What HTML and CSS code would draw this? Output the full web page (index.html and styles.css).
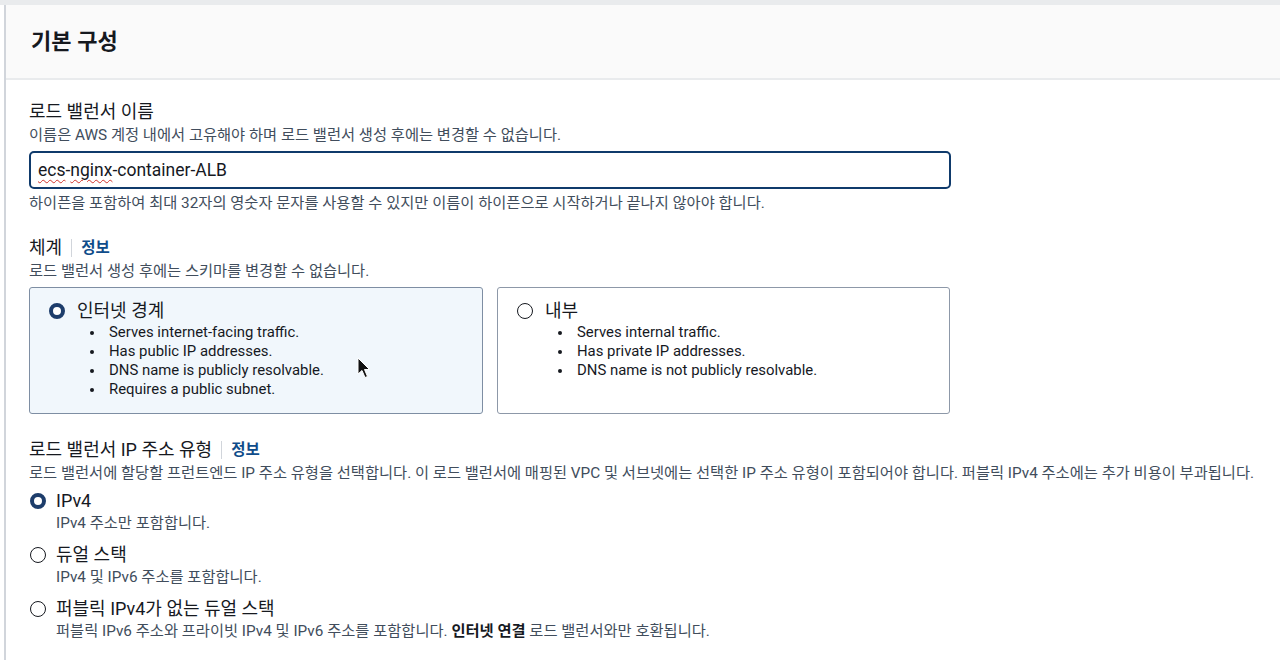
FILE: index.html
```html
<!DOCTYPE html>
<html lang="ko">
<head>
    <meta charset="UTF-8">
    <title>기본 구성</title>
    <link rel="stylesheet" href="styles.css">
</head>
<body>
    <div class="top-band"></div>
    <div class="panel">
        <div class="panel-header">
            <h2>기본 구성</h2>
        </div>
        <div class="panel-body">
            <div class="field">
                <div class="label">로드 밸런서 이름</div>
                <div class="desc">이름은 AWS 계정 내에서 고유해야 하며 로드 밸런서 생성 후에는 변경할 수 없습니다.</div>
                <div class="text-input"><span class="typo">ecs</span>-<span class="typo">nginx</span>-container-ALB</div>
                <div class="hint">하이픈을 포함하여 최대 32자의 영숫자 문자를 사용할 수 있지만 이름이 하이픈으로 시작하거나 끝나지 않아야 합니다.</div>
            </div>

            <div class="field">
                <div class="label">체계 <span class="info">정보</span></div>
                <div class="desc">로드 밸런서 생성 후에는 스키마를 변경할 수 없습니다.</div>
                <div class="cards">
                    <div class="card selected">
                        <div class="card-title"><span class="radio checked"></span>인터넷 경계</div>
                        <ul>
                            <li>Serves internet-facing traffic.</li>
                            <li>Has public IP addresses.</li>
                            <li>DNS name is publicly resolvable.</li>
                            <li>Requires a public subnet.</li>
                        </ul>
                        <svg class="cursor" width="14" height="22" viewBox="0 0 14 22">
                            <path d="M1 1 L1 17 L5 13.5 L8 20.5 L10.5 19.5 L7.5 12.5 L12.5 12.5 Z" fill="#111" stroke="#fff" stroke-width="1"/>
                        </svg>
                    </div>
                    <div class="card">
                        <div class="card-title"><span class="radio"></span>내부</div>
                        <ul>
                            <li>Serves internal traffic.</li>
                            <li>Has private IP addresses.</li>
                            <li>DNS name is not publicly resolvable.</li>
                        </ul>
                    </div>
                </div>
            </div>

            <div class="field">
                <div class="label">로드 밸런서 IP 주소 유형 <span class="info">정보</span></div>
                <div class="desc">로드 밸런서에 할당할 프런트엔드 IP 주소 유형을 선택합니다. 이 로드 밸런서에 매핑된 VPC 및 서브넷에는 선택한 IP 주소 유형이 포함되어야 합니다. 퍼블릭 IPv4 주소에는 추가 비용이 부과됩니다.</div>
                <div class="options">
                    <div class="option">
                        <div class="option-title"><span class="radio checked"></span>IPv4</div>
                        <div class="option-desc">IPv4 주소만 포함합니다.</div>
                    </div>
                    <div class="option">
                        <div class="option-title"><span class="radio"></span>듀얼 스택</div>
                        <div class="option-desc">IPv4 및 IPv6 주소를 포함합니다.</div>
                    </div>
                    <div class="option">
                        <div class="option-title"><span class="radio"></span>퍼블릭 IPv4가 없는 듀얼 스택</div>
                        <div class="option-desc">퍼블릭 IPv6 주소와 프라이빗 IPv4 및 IPv6 주소를 포함합니다. <b>인터넷 연결</b> 로드 밸런서와만 호환됩니다.</div>
                    </div>
                </div>
            </div>
        </div>
    </div>
</body>
</html>
```

FILE: styles.css
```css
body {
    margin: 0;
    font-family: Roboto, "Noto Sans CJK KR", sans-serif;
    color: #16191f;
    background-color: white;
    overflow: hidden;
}
.top-band {
    height: 5px;
    background-color: #e9ebed;
}
.panel {
    margin-left: 4px;
    border-left: 2px solid #d1d5db;
    height: 700px;
}
.panel-header {
    background-color: #fafafa;
    border-bottom: 2px solid #e9ebed;
    height: 73px;
    padding-left: 25px;
    display: flex;
    align-items: center;
}
.panel-header h2 {
    margin: 0 0 6px;
    font-size: 22px;
    font-weight: 700;
    font-family: "Open Sans", "Noto Sans CJK KR", sans-serif;
}
.panel-body {
    padding: 20px 0 0 23px;
}
.field {
    margin-bottom: 22px;
}
.label {
    font-size: 18px;
    line-height: 24px;
    display: flex;
    align-items: center;
}
.info {
    font-size: 15.5px;
    font-weight: 700;
    color: #0f4c8a;
    border-left: 1px solid #d1d5db;
    padding-left: 9px;
    margin-left: 9px;
    line-height: 18px;
}
.desc, .hint {
    font-size: 15.3px;
    line-height: 22px;
    color: #414d5c;
}
.text-input {
    width: 904px;
    height: 34px;
    margin: 5px 0 3px;
    border: 2px solid #0f3a6b;
    border-radius: 5px;
    padding: 0 7px;
    display: flex;
    align-items: center;
    font-size: 17.5px;
}
.typo {
    text-decoration: underline wavy #d0332b;
    text-decoration-thickness: 1px;
    text-underline-offset: 3px;
}
.cards {
    display: flex;
    gap: 14px;
    margin: 5px 0 24px;
}
.card {
    position: relative;
    width: 454px;
    height: 127px;
    border: 1px solid #8d98a8;
    border-radius: 3px;
    box-sizing: border-box;
    padding: 11px 19px;
}
.card:last-child {
    width: 453px;
}
.card.selected {
    background-color: #f1f7fc;
    border-color: #7e8ea3;
}
.card-title {
    display: flex;
    align-items: center;
    font-size: 18px;
    line-height: 24px;
}
.card-title .radio {
    margin-right: 12px;
}
.card ul {
    margin: 0;
    padding-left: 60px;
    list-style: none;
    font-size: 14.9px;
    line-height: 19px;
}
.card li {
    position: relative;
}
.card li::before {
    content: "";
    position: absolute;
    left: -19px;
    top: 8px;
    width: 4px;
    height: 4px;
    border-radius: 50%;
    background-color: #16191f;
}
.radio {
    width: 14px;
    height: 14px;
    border: 1.5px solid #16191f;
    border-radius: 50%;
    margin-right: 10px;
    flex-shrink: 0;
    background-color: white;
}
.radio.checked {
    width: 8px;
    height: 8px;
    border: 4.5px solid #1d3d6b;
}
.cursor {
    position: absolute;
    left: 327px;
    top: 69px;
}
.options {
    margin-top: 6px;
}
.option {
    margin-bottom: 10px;
    padding-left: 1px;
}
.option-title {
    display: flex;
    align-items: center;
    font-size: 18px;
    line-height: 22px;
}
.option-desc {
    padding-left: 26px;
    font-size: 15.3px;
    line-height: 22px;
    color: #414d5c;
}
.option-desc b {
    color: #16191f;
}
```
